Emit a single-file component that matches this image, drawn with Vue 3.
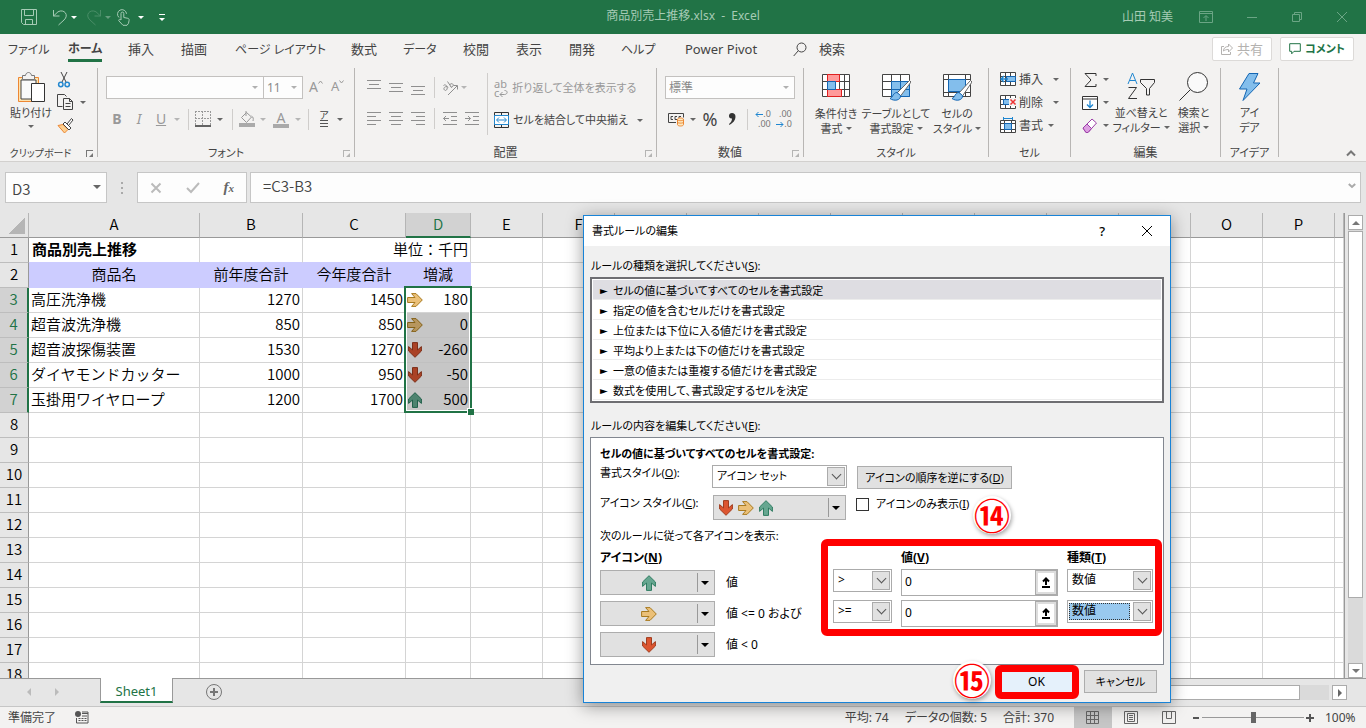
<script setup>
const menus = ['ファイル', 'ホーム', '挿入', '描画', 'ページ レイアウト', '数式', 'データ', '校閲', '表示', '開発', 'ヘルプ', 'Power Pivot']
const isKana = (text) => /^[\u30a0-\u30ff ]+$/.test(text)
const columns = ['A', 'B', 'C', 'D', 'E', 'F', 'G', 'H', 'I', 'J', 'K', 'L', 'M', 'N', 'O', 'P', '']
const blanks = columns.slice(4)
const products = [
  { row: 3, name: '高圧洗浄機', last: 1270, current: 1450, diff: 180, trend: 'flat' },
  { row: 4, name: '超音波洗浄機', last: 850, current: 850, diff: 0, trend: 'flat' },
  { row: 5, name: '超音波探傷装置', last: 1530, current: 1270, diff: -260, trend: 'down' },
  { row: 6, name: 'ダイヤモンドカッター', last: 1000, current: 950, diff: -50, trend: 'down' },
  { row: 7, name: '玉掛用ワイヤロープ', last: 1200, current: 1700, diff: 500, trend: 'up' }
]
const emptyRows = [8, 9, 10, 11, 12, 13, 14, 15, 16, 17, 18]
const ruleTypes = [
  'セルの値に基づいてすべてのセルを書式設定',
  '指定の値を含むセルだけを書式設定',
  '上位または下位に入る値だけを書式設定',
  '平均より上または下の値だけを書式設定',
  '一意の値または重複する値だけを書式設定',
  '数式を使用して、書式設定するセルを決定'
]
const iconRules = [
  { trend: 'up', text: '値', op: '>', value: '0', type: '数値' },
  { trend: 'flat', text: '値 <= 0 および', op: '>=', value: '0', type: '数値', focused: true },
  { trend: 'down', text: '値 < 0' }
]
const turns = { up: 'rotate(0 8 8)', flat: 'rotate(90 8 8)', down: 'rotate(180 8 8)' }
const arrow = 'M8 .7 14.4 7v4.4L10.5 8v7.4h-5V8l-3.9 3.4V7z'
</script>

<template>
  <div class="app">
    <header class="titlebar">
      <div class="quick">
        <button class="save" aria-label="上書き保存"><svg width="18" height="18" viewBox="0 0 18 18"><path d="M1.500 1.500h15v15h-13l-2-2zM4.500 1.500v6h9v-6M5.500 16.500v-5h7v5" /></svg></button>
        <button aria-label="元に戻す"><svg width="18" height="18" viewBox="0 0 18 18"><path d="M2.500 2v6h6M2.500 8 7 3.800C13 .5 18.500 7 13 12l-5.500 5" /></svg></button>
        <i class="caret"></i>
        <button class="redo" aria-label="やり直し"><svg width="18" height="18" viewBox="0 0 18 18"><path d="M15.500 2v6h-6M15.500 8 11 3.800C5 .5-.5 7 5 12l5.500 5" /></svg></button>
        <i class="caret faded"></i>
        <button class="finger" aria-label="タッチ/マウス モード"><svg width="18" height="18" viewBox="0 0 18 18"><path d="M4 9.500a4.500 4.500 0 1 1 7.500-3.700M6 12V5.500a1.400 1.400 0 0 1 2.800 0v4l4 .8c1 .2 1.500 1 1.300 2l-.6 3-1.500 2H8l-4-4.300c-1-1.400.8-2.200 2-1" /></svg></button>
        <i class="caret touch"></i>
        <i class="customize"><i class="caret"></i></i>
      </div>
      <div class="filename">商品別売上推移.xlsx &nbsp;-&nbsp; Excel</div>
      <div class="window-controls">
        <span>山田 知美</span>
        <button aria-label="リボンの表示オプション"><svg width="14" height="12" viewBox="0 0 14 12"><path d="M.5.5h13v11H.5zM.5 2.500h13M7 10V5M4.500 7 7 4.500 9.500 7" /></svg></button>
        <button aria-label="最小化"><svg width="12" height="12" viewBox="0 0 12 12"><path d="M1 6.500h10" /></svg></button>
        <button aria-label="元のサイズに戻す"><svg width="12" height="12" viewBox="0 0 12 12"><path d="M1.500 3.500h7v7h-7zM3.500 3.500v-2h7v7h-2" /></svg></button>
        <button aria-label="閉じる"><svg width="12" height="12" viewBox="0 0 12 12"><path d="m1 1 10 10M11 1 1 11" /></svg></button>
      </div>
    </header>

    <nav class="menubar">
      <button v-for="menu in menus" :key="menu" :class="{ active: menu === 'ホーム', kana: isKana(menu) }">{{ menu }}</button>
      <button class="find"><svg width="14" height="15" viewBox="0 0 14 15"><circle cx="8.500" cy="5.500" r="4.500" /><path d="M5.300 8.700.7 14" /></svg>検索</button>
      <div class="share">
        <button class="disabled"><svg width="12" height="12" viewBox="0 0 12 12"><path d="M3 3.500H.5v8h9V9M2.500 8c0-3 2-4.500 5-4.500V1l4 4-4 4V6.500C5 6.500 4 7 2.500 8z" /></svg>共有</button>
        <button class="comment"><svg width="12" height="12" viewBox="0 0 12 12"><path d="M.7.7h10.600v7.600H5L2.700 10.800V8.300h-2z" /></svg>コメント</button>
      </div>
    </nav>

    <section class="ribbon">
      <div class="group clipboard">
        <div class="body">
          <button class="big">
            <svg width="30" height="32" viewBox="0 0 30 32"><path d="M2.500 5.500h20v24h-20z" fill="#fde3b0" stroke="#ed8733" /><path d="M5 8h15v19H5z" fill="#fafafa" /><path d="M6.500 7.500v-4h3c.5-4 5.500-4 6 0h3v4z" fill="#f3f2f1" stroke="#777" /><path d="M15.500 11.500h13v18h-13z" fill="#fff" stroke="#333" /></svg>
            貼り付け<i class="caret"></i>
          </button>
          <div class="rows">
            <button aria-label="切り取り"><svg width="14" height="17" viewBox="0 0 14 17"><path d="M4 1l5 10M10 1 5 11" stroke="#444" /><circle cx="3.800" cy="13.500" r="2.200" stroke="#2488cf" stroke-width="1.500" /><circle cx="10.200" cy="13.500" r="2.200" stroke="#2488cf" stroke-width="1.500" /></svg></button>
            <button aria-label="コピー"><svg width="17" height="17" viewBox="0 0 17 17"><path d="M5.500 12.500h-5V.5h7l2 2M6.500 4.500h6l3 3v8h-9zM12.500 4.500v3h3M8.500 9.500h5M8.500 12.500h5" stroke="#444" /></svg><i class="caret"></i></button>
            <button aria-label="書式のコピー/貼り付け"><svg width="17" height="17" viewBox="0 0 17 17"><path d="m1 8.500 5-1 5 5L7.500 16z" fill="#fdd090" stroke="#ed8733" /><path d="m6 7 2-2 6 6-2 2zM10 7l4.500-5.500L16 3l-4.500 5.500" fill="#fff" stroke="#444" /></svg></button>
          </div>
        </div>
        <div class="caption">クリップボード<i class="launcher"></i></div>
      </div>

      <div class="group font">
        <div class="body">
          <div class="line1">
            <div class="combo wide"><input aria-label="フォント名"><i class="caret"></i></div>
            <div class="combo size"><input aria-label="フォント サイズ" value="11"><i class="caret"></i></div>
            <button class="off grow" aria-label="フォント サイズの拡大">A<svg width="5" height="4" viewBox="0 0 5 4"><path d="m.5 3.500 2-2.500 2 2.500" /></svg></button>
            <button class="off grow shrink" aria-label="フォント サイズの縮小">A<svg width="5" height="4" viewBox="0 0 5 4"><path d="m.5.500 2 2.500 2-2.500" /></svg></button>
          </div>
          <div class="line2">
            <button class="off"><b>B</b></button>
            <button class="off"><em>I</em></button>
            <button class="off"><u>U</u></button>
            <i class="caret off"></i>
            <i class="sep"></i>
            <button aria-label="罫線"><svg width="16" height="16" viewBox="0 0 16 16"><path d="M.5 0v14M7.500 0v14M15.500 0v14M0 .5h16M0 7.500h16" stroke="#999" stroke-dasharray="2 1" /><path d="M0 15h16" stroke="#333" stroke-width="1.500" /></svg></button>
            <i class="caret"></i>
            <i class="sep"></i>
            <button aria-label="塗りつぶし"><svg width="16" height="16" viewBox="0 0 16 16"><path d="m2.500 6.500 5-5 5 4.500-5 5.500zM7 0v5M12.500 5c2 1 2 3 1.500 5" stroke="#999" /><path d="M0 12h16v4H0z" fill="#aaa" stroke="none" /></svg></button>
            <i class="caret off"></i>
            <button class="off fontcolor">A</button>
            <i class="caret off"></i>
            <i class="sep"></i>
            <button class="ruby">ア<i></i></button>
            <i class="caret"></i>
          </div>
        </div>
        <div class="caption kana">フォント<i class="launcher off"></i></div>
      </div>

      <div class="group align">
        <div class="body">
          <div class="aligns">
            <svg width="16" height="18" viewBox="0 0 16 18"><path d="M1 1.500h14M3 5.500h10M1 9.500h14" /></svg>
            <svg width="16" height="18" viewBox="0 0 16 18"><path d="M1 4.500h14M3 8.500h10M1 12.500h14" /></svg>
            <svg width="16" height="18" viewBox="0 0 16 18"><path d="M1 7.500h14M3 11.500h10M1 15.500h14" /></svg>
            <i class="sep"></i>
            <svg width="16" height="16" viewBox="0 0 16 16"><path d="M1.500 5.500c1.500-1.500 3 0 4.500 2M5 6.500C2.500 6.500 1 8.500 2.500 10S6 9 5 6.500M5.500 1.500l4 6M8 4.500c2-2 4 0 3 1.500s-2 1.500-2.500.5M6 15l9-9M11.500 5.500h4v4" /></svg>
            <i class="caret off"></i>
            <svg width="16" height="16" viewBox="0 0 16 16"><path d="M1 1.500h14M1 5.500h9M1 9.500h14M1 13.500h9" /></svg>
            <svg width="16" height="16" viewBox="0 0 16 16"><path d="M1 1.500h14M3 5.500h10M1 9.500h14M3 13.500h10" /></svg>
            <svg width="16" height="16" viewBox="0 0 16 16"><path d="M1 1.500h14M6 5.500h9M1 9.500h14M6 13.500h9" /></svg>
            <i class="sep"></i>
            <svg width="16" height="16" viewBox="0 0 16 16"><path d="M1 1.500h14M9 5.500h6M9 9.500h6M1 13.500h14M7 7.500H1.500M4 5 1.500 7.500 4 10" /></svg>
            <svg width="16" height="16" viewBox="0 0 16 16"><path d="M1 1.500h14M9 5.500h6M9 9.500h6M1 13.500h14M1 7.500h5.500M4 5l2.500 2.500L4 10" /></svg>
          </div>
          <div class="merges">
            <button class="off"><span class="wrapglyph">ab<br>c<svg width="9" height="7" viewBox="0 0 9 7"><path d="M5.500.500c4 0 3 4 0 4H1M3.500 2 1 4.500 3.500 7" /></svg></span>折り返して全体を表示する</button>
            <button><svg width="15" height="16" viewBox="0 0 15 16"><path d="M.5.500h14v15H.5zM7.500.500v3M7.500 12.500v3" stroke="#333" /><path d="M.5 3.500h14v9H.5z" fill="#fff" stroke="#2488cf" /><path d="M3 8h9M5 5.500 2.500 8 5 10.500M10 5.500 12.500 8 10 10.500" stroke="#2488cf" /></svg>セルを結合して中央揃え<i class="caret"></i></button>
          </div>
        </div>
        <div class="caption">配置<i class="launcher off"></i></div>
      </div>

      <div class="group number">
        <div class="body">
          <div class="combo"><input aria-label="表示形式" value="標準"><i class="caret"></i></div>
          <div class="line2">
            <button aria-label="通貨表示形式"><svg width="18" height="16" viewBox="0 0 18 16"><path d="M.5 11.500v-9h15v4M.5 11.500H8M5 5.500H3v3h2M9 8.500h-2v-3h2M11 7V5.500h2" stroke="#444" /><path d="M9.500 8.500v5c0 2 6 2 6 0v-5c0-2-6-2-6 0zc0 1.500 6 1.500 6 0M9.500 11c0 1.500 6 1.500 6 0" fill="#fde9c0" stroke="#ed8733" /></svg></button>
            <i class="caret"></i>
            <button class="percent">%</button>
            <button aria-label="桁区切り"><svg width="10" height="15" viewBox="0 0 10 15"><path d="M5 1c-4 0-4 6 0 5.500 0 2-1 4-3 5.500l.5 1C6 11 8.500 8 8.500 5 8.500 2 7 1 5 1z" fill="#333" stroke="none" /></svg></button>
            <i class="sep"></i>
            <button class="decimal"><span><svg width="8" height="7" viewBox="0 0 8 7"><path d="M8 3.500H1M3.500 1 1 3.500 3.500 6" /></svg>.0</span><span>.00</span></button>
            <button class="decimal"><span>.00</span><span><svg width="8" height="7" viewBox="0 0 8 7"><path d="M0 3.500h7M4.500 1 7 3.500 4.500 6" /></svg>.0</span></button>
          </div>
        </div>
        <div class="caption">数値<i class="launcher off"></i></div>
      </div>

      <div class="group styles">
        <div class="body">
          <button class="big"><svg width="30" height="28" viewBox="0 0 30 28"><path d="M1.500 1.500h27v22h-27zM1.500 8.500h27M1.500 16.500h27M6.500 1.500v22M18.500 1.500v22M23.500 1.500v22" fill="#fff" stroke="#444" /><path d="M6.500 1.500h12v7h-12zM6.500 16.500h14v7h-14z" fill="#ff9a9a" stroke="#e02020" /><path d="M6.500 8.500h8v8h-8z" fill="#83beec" stroke="#1466b3" /></svg>条件付き<span>書式<i class="caret"></i></span></button>
          <button class="big"><svg width="30" height="28" viewBox="0 0 30 28"><path d="M1.500 1.500h27v22h-27zM1.500 8.500h27M1.500 16.500h27M10.500 1.500v22M19.500 1.500v22" fill="#fff" stroke="#444" /><path d="M10.500 8.500h18v15h-18zM10.500 16.500h18M19.500 8.500v15" fill="#83beec" stroke="#1466b3" /><path d="M16 20 28.500 7.500 30 9 19.500 23z" fill="#fff" stroke="#666" /><path d="M16 19.500c-4 0-4 5-7 6 4 3 11 2 10.500-3z" fill="#83beec" stroke="#1466b3" /></svg>テーブルとして<span>書式設定<i class="caret"></i></span></button>
          <button class="big"><svg width="30" height="28" viewBox="0 0 30 28"><path d="M1.500 1.500h27v22h-27zM1.500 6.500h27M1.500 19.500h27M6.500 1.500v22M23.500 1.500v22" fill="#fff" stroke="#444" /><path d="M6.500 6.500h17v12h-17z" fill="#83beec" stroke="#1466b3" /><path d="M17 20 28.500 7.500 30 9 20.500 23z" fill="#fff" stroke="#666" /><path d="M17 19.500c-4 0-4 5-7 6 4 3 11 2 10.500-3z" fill="#83beec" stroke="#1466b3" /></svg>セルの<span>スタイル<i class="caret"></i></span></button>
        </div>
        <div class="caption kana">スタイル</div>
      </div>

      <div class="group cells">
        <div class="body rows">
          <button><svg width="17" height="15" viewBox="0 0 17 15"><path d="M.5.500h15v13H.5zM.5 4.500h15M.5 9.500h15M5.500.500v13M10.500.500v13" fill="#fff" stroke="#444" /><path d="M6.500 4.500h9v5h-9z" fill="#83beec" stroke="#1466b3" /><path d="M8 7H1M4 4 1 7l3 3" stroke="#1f86d0" stroke-width="1.500" /></svg>挿入<i class="caret far"></i></button>
          <button><svg width="17" height="15" viewBox="0 0 17 15"><path d="M.5.500h15v13H.5zM.5 4.500h15M.5 9.500h15M5.500.500v13M10.500.500v13" fill="#fff" stroke="#444" /><path d="M3.500 4.500h6v5h-6z" fill="#83beec" stroke="#1466b3" /><path d="M9 3h8v8H9z" fill="#f3f2f1" stroke="none" /><path d="m10.500 4.500 5 5M15.500 4.500l-5 5" stroke="#e33" stroke-width="1.500" /></svg>削除<i class="caret far"></i></button>
          <button><svg width="17" height="17" viewBox="0 0 17 17"><path d="M.5 3.500h15v12H.5zM.5 6.500h15M.5 12.500h15M4.500 3.500v12M11.500 3.500v12" fill="#fff" stroke="#444" /><path d="M4.500 6.500h7v6h-7z" fill="#83beec" stroke="#1466b3" /><path d="M3.500 1.500h9M3.500 0v3M12.500 0v3" stroke="#1f86d0" /></svg>書式<i class="caret near"></i></button>
        </div>
        <div class="caption kana">セル</div>
      </div>

      <div class="group edit">
        <div class="body">
          <div class="rows">
            <button aria-label="合計"><svg width="16" height="16" viewBox="0 0 16 16"><path d="M14 4V1.500H3L9 8l-6 6.500h11V12" stroke="#333" /></svg><i class="caret"></i></button>
            <button aria-label="フィル"><svg width="16" height="16" viewBox="0 0 16 16"><path d="M.5 1.500h15v13H.5zM.5 4h15" fill="#fff" stroke="#333" /><path d="M8 5.500V12M5 9.500l3 3 3-3" stroke="#1f86d0" stroke-width="1.300" /></svg><i class="caret"></i></button>
            <button aria-label="クリア"><svg width="16" height="16" viewBox="0 0 16 16"><path d="m1 10 9-9 4.500 4-8.500 9.500H4z" fill="#fff" stroke="#9c3fa8" /><path d="m1 10 4-4 4.500 4.500L6 14.500H4z" fill="#dd9fe2" stroke="#9c3fa8" /></svg><i class="caret"></i></button>
          </div>
          <button class="big"><svg width="30" height="30" viewBox="0 0 30 30"><path d="m2 12 4.500-11L11 12M3.500 8.500h6" stroke="#1f86d0" /><path d="M2.500 15.500h8l-8 11h8.500M14.500 7.500h14v3l-5 6V23h-3v-6.500l-6-6z" stroke="#333" /></svg>並べ替えと<span>フィルター<i class="caret"></i></span></button>
          <button class="big"><svg width="32" height="30" viewBox="0 0 32 30"><circle cx="19.500" cy="10.500" r="10" fill="#fafafa" stroke="#333" /><path d="M12.500 17.500 1.500 28.500" stroke="#333" /></svg>検索と<span>選択<i class="caret"></i></span></button>
        </div>
        <div class="caption">編集</div>
      </div>

      <div class="group ideas">
        <div class="body">
          <button class="big"><svg width="24" height="30" viewBox="0 0 24 30"><path d="M11 1.500h9L15.500 11H22L5 28.500 9 17H1.500z" fill="#83beec" stroke="#1466b3" /></svg>アイ<span>デア</span></button>
        </div>
        <div class="caption kana">アイデア</div>
      </div>
      <button class="collapse" aria-label="リボンを折りたたむ"><svg width="10" height="7" viewBox="0 0 10 7"><path d="m1 5.500 4-4 4 4" stroke-width="2" /></svg></button>
    </section>

    <section class="formulabar">
      <div class="namebox"><input aria-label="名前ボックス" value="D3"><i class="caret"></i></div>
      <div class="dots"><i></i><i></i><i></i></div>
      <div class="fx">
        <button aria-label="キャンセル"><svg width="12" height="12" viewBox="0 0 12 12"><path d="m1.500 1.500 9 9M10.500 1.500l-9 9" stroke-width="2" /></svg></button>
        <button aria-label="入力"><svg width="14" height="12" viewBox="0 0 14 12"><path d="m1 6 4 4 8-9" stroke-width="2" /></svg></button>
        <button class="insertfx"><em>f<small>x</small></em></button>
      </div>
      <div class="formula"><input aria-label="数式バー" value="=C3-B3"><svg width="8" height="6" viewBox="0 0 8 6"><path d="m.8 1 3.200 3L7.200 1" /></svg></div>
    </section>

    <main class="workspace">
      <div class="sheet">
        <table>
          <colgroup><col class="c-head"><col class="c-a"><col class="c-b"><col class="c-b"><col class="c-d"><col v-for="n in 12" :key="n" class="c-std"><col></colgroup>
          <thead>
            <tr><th class="corner"></th><th v-for="(c, i) in columns" :key="i" :class="{ picked: c === 'D' }">{{ c }}</th></tr>
          </thead>
          <tbody>
            <tr class="first"><th>1</th><td class="title filled">商品別売上推移</td><td class="filled"></td><td class="filled num" colspan="2">単位：千円</td><td v-for="(b, i) in blanks" :key="i"></td></tr>
            <tr class="labels"><th>2</th><td class="filled">商品名</td><td class="filled">前年度合計</td><td class="filled">今年度合計</td><td class="filled">増減</td><td v-for="(b, i) in blanks" :key="i"></td></tr>
            <tr v-for="p in products" :key="p.row" class="picked">
              <th>{{ p.row }}</th><td>{{ p.name }}</td><td class="num">{{ p.last }}</td><td class="num">{{ p.current }}</td>
              <td class="diff" :class="{ shaded: p.row > 3 }"><div><svg class="trend" :class="p.trend" width="16" height="16" viewBox="0 0 16 16"><path :d="arrow" :transform="turns[p.trend]" /></svg>{{ p.diff }}</div></td>
              <td v-for="(b, i) in blanks" :key="i"></td>
            </tr>
            <tr v-for="r in emptyRows" :key="r"><th>{{ r }}</th><td v-for="(c, i) in columns" :key="i"></td></tr>
          </tbody>
        </table>
        <div class="selection"><i></i></div>
      </div>
      <div class="vscroll">
        <button class="up" aria-label="上へ"><i></i></button>
        <div class="track"><div class="thumb"></div></div>
        <button class="down" aria-label="下へ"><i></i></button>
      </div>
    </main>

    <div class="sheetbar">
      <button class="nav prev" aria-label="前のシート"></button>
      <button class="nav next" aria-label="次のシート"></button>
      <button class="tab">Sheet1</button>
      <button class="add" aria-label="新しいシート"><svg width="18" height="18" viewBox="0 0 18 18"><circle cx="9" cy="9" r="7.500" /><path d="M9 5v8M5 9h8" stroke-width="2" /></svg></button>
      <div class="hscroll"><div class="thumb"></div></div>
      <button class="right" aria-label="右へ"></button>
    </div>

    <footer class="status">
      <span>準備完了</span>
      <svg class="macro" width="14" height="13" viewBox="0 0 14 13"><circle cx="3" cy="3" r="3" fill="#555" /><path d="M7 1h6v11H1.500V7M7 2.500h6" fill="none" stroke="#555" /><path d="M3.500 7.500h2M6.500 7.500h2M9.500 7.500h2M3.500 9.500h2M6.500 9.500h2M9.500 9.500h2M7 5h5" stroke="#555" /></svg>
      <div class="totals"><span>平均: 74</span><span>データの個数: 5</span><span>合計: 370</span></div>
      <button class="view on" aria-label="標準"><svg width="14" height="14" viewBox="0 0 14 14"><path d="M.5.500h12v12H.5zM.5 4.500h12M.5 8.500h12M4.500.500v12M8.500.500v12" /></svg></button>
      <button class="view" aria-label="ページ レイアウト"><svg width="14" height="14" viewBox="0 0 14 14"><path d="M.5.500h13v12H.5zM3.500 2.500h7v8h-7zM5 4.500h4M5 6.500h4M5 8.500h4" /></svg></button>
      <button class="view" aria-label="改ページ プレビュー"><svg width="14" height="14" viewBox="0 0 14 14"><path d="M.5.500h13v12H.5zM4.500.500v7h5v-7" /></svg></button>
      <button class="zoom out" aria-label="縮小"><svg width="8" height="8" viewBox="0 0 8 8"><path d="M1 4h6" /></svg></button>
      <input class="slider" type="range" min="0" max="100" value="50" aria-label="ズーム">
      <button class="zoom" aria-label="拡大"><svg width="8" height="8" viewBox="0 0 8 8"><path d="M0 4h8M4 0v8" /></svg></button>
      <span class="percentage">100%</span>
    </footer>

    <div class="dialog" role="dialog" aria-label="書式ルールの編集">
      <div class="dialog-title"><span>書式ルールの編集</span><button>?</button><button aria-label="閉じる"><svg width="12" height="12" viewBox="0 0 12 12"><path d="m1 1 10 10M11 1 1 11" /></svg></button></div>
      <div class="dialog-body">
        <p class="prompt">ルールの種類を選択してください(<u>S</u>):</p>
        <ul class="types"><li v-for="(t, i) in ruleTypes" :key="t" :class="{ chosen: i === 0 }"><i>►</i>{{ t }}</li></ul>
        <p class="prompt second">ルールの内容を編集してください(<u>E</u>):</p>
        <div class="details">
          <p><b>セルの値に基づいてすべてのセルを書式設定:</b></p>
          <div class="setting">
            <label for="fmt">書式スタイル(<u>O</u>):</label>
            <div class="dropdown"><select id="fmt"><option>アイコン セット</option></select><i></i></div>
            <button class="plain">アイコンの順序を逆にする(<u>D</u>)</button>
          </div>
          <div class="setting icons">
            <span>アイコン スタイル(<u>C</u>):</span>
            <button class="iconpick set" aria-label="アイコン スタイル"><span><svg v-for="t in ['down', 'flat', 'up']" :key="t" class="trend" :class="t" width="16" height="16" viewBox="0 0 16 16"><path :d="arrow" :transform="turns[t]" /></svg></span><i></i></button>
            <label class="check"><input type="checkbox"><span>アイコンのみ表示(<u>I</u>)</span></label>
          </div>
          <p class="instruction">次のルールに従って各アイコンを表示:</p>
          <div class="heads"><b>アイコン(<u>N</u>)</b><b>値(<u>V</u>)</b><b>種類(<u>T</u>)</b></div>
          <div v-for="r in iconRules" :key="r.trend" class="rule">
            <button class="iconpick" :aria-label="r.text"><span><svg class="trend" :class="r.trend" width="16" height="16" viewBox="0 0 16 16"><path :d="arrow" :transform="turns[r.trend]" /></svg></span><i></i></button>
            <span class="cond">{{ r.text }}</span>
            <template v-if="r.op">
              <div class="dropdown op"><select aria-label="演算子"><option>{{ r.op }}</option></select><i></i></div>
              <div class="ref"><input aria-label="値" :value="r.value"><button aria-label="セル参照"><svg width="10" height="11" viewBox="0 0 10 11"><path d="M5 8V2M2 4.500 5 1.500l3 3M1 10h8" /></svg></button></div>
              <div class="dropdown type" :class="{ focused: r.focused }"><select aria-label="種類"><option>{{ r.type }}</option></select><i></i></div>
            </template>
          </div>
        </div>
        <div class="actions"><button class="plain ok">OK</button><button class="plain">キャンセル</button></div>
      </div>
      <div class="frame values"></div>
      <div class="frame confirm"></div>
      <div class="step fourteen">⑭</div>
      <div class="step fifteen">⑮</div>
    </div>
  </div>
</template>

<style>
body { margin: 0; overflow: hidden; }
</style>

<style scoped>
* { box-sizing: border-box; }
.app { position: relative; display: flex; flex-direction: column; height: 100vh; overflow: hidden; background: #e6e6e6; color: #444; font: 12px/16px "Noto Sans", "Noto Sans CJK JP", sans-serif; font-feature-settings: "palt"; white-space: nowrap; }
button, input, select { font: inherit; font-feature-settings: inherit; color: inherit; border: 0; padding: 0; margin: 0; background: none; min-width: 0; border-radius: 0; }
select { appearance: none; }
svg { fill: none; stroke: currentColor; flex: none; }
p, ul { margin: 0; padding: 0; }
i { font-style: normal; }
.caret { display: block; width: 0; height: 0; border: 3px solid transparent; border-top-color: #666; border-bottom: 0; flex: none; }
.off { color: #999; }
.caret.off { border-top-color: #b5b5b5; }

.titlebar { display: grid; grid-template-columns: 1fr auto 1fr; align-items: center; flex: none; height: 34px; background: #217346; color: #a6cbb5; }
.quick { display: flex; align-items: center; padding-left: 20px; gap: 2px; }
.quick button { display: flex; }
.quick .save { margin-right: 11px; }
.quick .caret { border-top-color: #fff; }
.quick .redo { margin-left: 6px; opacity: .3; }
.quick .faded { opacity: .3; }
.quick .finger { margin-left: 2px; }
.quick .touch { margin-left: 3px; }
.customize { border-top: 1px solid #fff; width: 6px; padding-top: 3px; margin-left: 13px; }
.filename { padding-bottom: 3px; }
.window-controls { display: flex; justify-content: flex-end; align-items: center; padding-right: 18px; gap: 33px; color: #6ba585; }
.window-controls span { color: #a6cbb5; margin-right: -7px; }
.window-controls button { display: flex; }

.menubar { display: grid; grid-template-columns: 60px 60px 53px 54px 116px 52px 60px 53px 53px 52px 64px 108px auto 1fr; flex: none; height: 30px; padding: 3px 12px 0 8px; background: #f3f2f1; font-size: 13px; }
.menubar button { justify-self: start; height: 24px; }
.menubar .kana { font-size: 12px; padding-top: 2px; }
.menubar .active { font-weight: 700; border-bottom: 3px solid #217346; height: 25px; line-height: 20px; }
.menubar .find { display: flex; align-items: center; gap: 12px; }
.share { display: flex; justify-content: flex-end; gap: 8px; }
.menubar .share button { display: flex; align-items: center; justify-content: center; gap: 4px; width: 60px; background: #fff; border: 1px solid #dcdad8; border-radius: 2px; }
.menubar .share .disabled { color: #b4b2b0; }
.menubar .share .comment { width: 74px; color: #217346; font-weight: 700; font-size: 11px; }

.ribbon { display: flex; flex: none; height: 98px; padding: 4px 0 4px; background: #f3f2f1; border-bottom: 1px solid #d2d0ce; }
.group { display: flex; flex-direction: column; flex: none; height: 89px; border-right: 1px solid #b8b6b4; }
.body { flex: none; display: flex; height: 78px; }
.caption { position: relative; height: 11px; line-height: 14px; text-align: center; }
.caption.kana { font-size: 11px; }
.launcher { position: absolute; right: 4px; bottom: 0; width: 7px; height: 7px; border: solid #777; border-width: 1px 0 0 1px; }
.launcher::after { content: ""; position: absolute; right: 0; bottom: 0; border: 2px solid transparent; border-right-color: #777; border-bottom-color: #777; }
.launcher.off { opacity: .5; }
.big { display: flex; flex-direction: column; align-items: center; padding-top: 4px; line-height: 15px; font-size: 11px; }
.big span { display: flex; align-items: center; gap: 3px; }
.rows { display: flex; flex-direction: column; }
.rows button { display: flex; align-items: center; height: 23px; gap: 4px; }
.clipboard { width: 98px; }
.clipboard .big { width: 52px; margin-left: 5px; line-height: 17px; }
.clipboard .big .caret { margin-top: 4px; }
.clipboard .rows button { gap: 6px; }
.clipboard .caption { padding-right: 16px; font-size: 10px; }
.font { width: 257px; }
.font .body, .number .body { flex-direction: column; padding: 8px 8px 0; gap: 8px; }
.combo { display: flex; align-items: center; height: 23px; border: 1px solid #c3c1bf; background: #fdfdfd; padding: 0 5px 0 3px; color: #8a8a8a; }
.combo input { flex: 1; width: 10px; }
.combo .caret { border-top-color: #b0b0b0; }
.line1 { display: flex; }
.wide { width: 158px; }
.size { width: 40px; margin-left: -1px; }
.grow { display: flex; font-size: 14px; line-height: 21px; margin-left: 6px; }
.grow svg { margin-top: 4px; }
.shrink { font-size: 13px; margin-left: 8px; }
.line2 { display: grid; height: 24px; align-items: center; justify-items: center; }
.font .line2 { grid-template-columns: 22px 22px 22px 10px 12px 18px 16px 8px 22px 10px 26px 8px 12px 20px 12px; font-size: 14px; }
.line2 button { display: flex; }
.sep { width: 1px; height: 21px; background: #cfcdcb; }
.fontcolor { border-bottom: 4px solid #aaa; width: 16px; height: 16px; justify-content: center; line-height: 12px; margin-top: 1px; }
.line2 .ruby { flex-direction: column; align-items: center; font-size: 10px; line-height: 9px; }
.ruby i { width: 8px; height: 7px; border: solid #555; border-width: 1px 0; background: linear-gradient(#555, #555) center / 8px 1px no-repeat; }
.align { width: 302px; }
.aligns { display: grid; grid-template-columns: 22px 22px 22px 10px 22px 22px; grid-template-rows: 21px 21px; gap: 10px 0; width: 132px; padding: 9px 0 0 8px; align-items: center; justify-items: center; color: #8f8f8f; }
.aligns .caret { justify-self: start; }
.merges { display: flex; flex-direction: column; gap: 8px; margin-top: 5px; height: 62px; border-left: 1px solid #cfcdcb; padding: 3px 0 0 6px; font-size: 11px; }
.merges button { display: flex; align-items: center; height: 24px; gap: 4px; }
.merges .caret { margin-left: 5px; }
.wrapglyph { font-size: 11px; line-height: 9px; text-align: left; }
.number { width: 147px; }
.number .line2 { grid-template-columns: 24px 8px 26px 18px 12px 20px 22px; }
.percent { font-size: 18px; }
.number .decimal { flex-direction: column; align-items: flex-end; font-size: 9px; line-height: 10px; color: #777; }
.decimal span { display: flex; align-items: center; }
.decimal svg { stroke: #1f86d0; }
.styles { width: 185px; }
.styles .body { display: grid; grid-template-columns: 48px 72px 50px; padding-left: 8px; justify-items: center; }
.styles .big { padding-top: 5px; }
.styles .big svg { margin-bottom: 5px; }
.cells { width: 82px; }
.cells .body { padding-left: 11px; }
.cells button { gap: 2px; }
.cells .far { margin-left: 8px; }
.cells .near { margin-left: 3px; }
.edit { width: 150px; }
.edit .rows { padding-left: 11px; width: 44px; }
.edit .rows button { gap: 5px; }
.edit > .body > .big { width: 53px; }
.edit .big svg, .ideas .big svg { margin-bottom: 3px; }
.ideas { width: 58px; }
.ideas .body { justify-content: center; }
.collapse { display: flex; align-self: flex-end; margin: 0 10px 0 auto; color: #777; }

.formulabar { display: flex; flex: none; height: 51px; padding: 10px 5px 10px; }
.formulabar > div { border: 1px solid #c6c6c6; background: #fdfdfd; height: 31px; }
.namebox { display: flex; align-items: center; width: 102px; padding: 2px 5px 0 6px; font: 350 15px/20px "Noto Sans CJK JP", sans-serif; }
.namebox input { flex: 1; }
.namebox .caret { border-width: 4px 4px 0; margin-bottom: 4px; }
.formulabar .dots { display: flex; flex-direction: column; justify-content: center; align-items: center; gap: 3px; width: 30px; border: 0; background: none; }
.dots i { width: 2px; height: 2px; background: #aaa; }
.fx { display: flex; align-items: center; justify-content: space-around; width: 110px; color: #bbb; }
.fx button { display: flex; }
.insertfx { font: 700 15px/18px "Liberation Serif", serif; color: #666; }
.insertfx small { font-size: 11px; }
.formula { display: flex; flex: 1; align-items: center; margin-left: 3px; padding: 0 4px 4px 12px; font: 350 15px/20px "Noto Sans CJK JP", sans-serif; }
.formula input { flex: 1; }
.formula svg { stroke: #aaa; stroke-width: 2; }

.workspace { display: flex; flex: 1; min-height: 0; }
.sheet { position: relative; flex: 1; overflow: hidden; border-right: 1px solid #999; }
table { width: 100%; table-layout: fixed; border-spacing: 0; font: 350 15px/22px "Noto Sans CJK JP", sans-serif; font-feature-settings: normal; color: #000; }
.c-head { width: 29px; } .c-a { width: 171px; } .c-b { width: 103px; } .c-d { width: 65px; } .c-std { width: 72px; }
th { height: 25px; padding: 0; vertical-align: top; font-weight: 350; background: #e6e6e6; border: solid #bdbdbd; border-width: 0 1px 1px 0; }
thead th { border-bottom-color: #999; border-right-color: #b5b5b5; }
tbody th { border-right-color: #999; }
thead .picked { background: #d2d2d2; color: #217346; border-bottom: 2px solid #217346; }
.picked th { background: #d2d2d2; color: #217346; border-right: 2px solid #217346; }
.corner { background: linear-gradient(135deg, transparent 50%, #b5b5b5 50%) 8px 4px / 17px 17px no-repeat #e6e6e6; }
td { height: 25px; padding: 0 2px; vertical-align: top; background: #fff; border: solid #d4d4d4; border-width: 0 1px 1px 0; overflow: hidden; }
.first .filled { border-bottom-color: #ccccff; }
.title { font-weight: 700; padding-left: 3px; }
.labels .filled { background: #ccccff; border-color: #ccccff; text-align: center; }
.num { text-align: right; }
.diff { padding: 0 2px 0 1px; }
.diff div { display: flex; justify-content: space-between; }
.diff svg { margin-top: 4px; }
.shaded { background: #c6c6c6; border-color: #c0c0c0; }
.selection { position: absolute; left: 404px; top: 73px; width: 68px; height: 127px; border: 2px solid #217346; box-shadow: inset 0 0 0 1px #fff; }
.selection i { position: absolute; right: -4px; bottom: -4px; width: 7px; height: 7px; background: #217346; border: 1px solid #fff; border-width: 1px 0 0 1px; }
.trend { stroke-width: 1; }
.trend.up { fill: #66a690; stroke: #2f7d62; }
.trend.flat { fill: #ebc078; stroke: #a87a20; }
.trend.down { fill: #dc5530; stroke: #a03c1e; }
.shaded .up { fill: #4d836f; stroke: #20604a; }
.shaded .flat { fill: #b7965e; stroke: #846118; }
.shaded .down { fill: #aa4226; stroke: #7c2e18; }
.vscroll { display: flex; flex-direction: column; width: 21px; padding: 2px 3px 0; flex: none; }
.vscroll button { display: flex; align-items: center; justify-content: center; height: 15px; background: #fff; border: 1px solid #ababab; }
.vscroll button i { border: 4px solid transparent; border-top: 0; border-bottom-color: #777; }
.vscroll .down i { border-top: 4px solid #777; border-bottom: 0; }
.track { flex: 1; background: #dadada; padding-top: 1px; }
.vscroll .thumb { height: 85%; background: #fff; border: 1px solid #ababab; }

.sheetbar { display: flex; flex: none; height: 28px; border-top: 1px solid #999; padding-right: 19px; }
.nav { width: 28px; padding: 0 0 2px; display: flex; align-items: center; justify-content: center; }
.nav::after { content: ""; border: 4px solid transparent; border-right-color: #bbb; border-left: 0; }
.prev { margin-left: 15px; }
.next::after { border-left: 4px solid #bbb; border-right: 0; }
.tab { width: 73px; height: 25px; margin: -1px 0 0 29px; background: #fff; border: 1px solid #999; border-width: 0 1px 2px; border-bottom-color: #217346; color: #217346; font-size: 13px; padding-top: 2px; }
.add { display: flex; align-items: center; margin-left: 32px; padding-bottom: 2px; color: #777; }
.hscroll { display: flex; width: 590px; height: 15px; margin: 6px 3px 0 auto; background: #dadada; }
.hscroll .thumb { width: 95%; background: #fff; border: 1px solid #ababab; }
.right { display: flex; align-items: center; justify-content: center; width: 15px; height: 15px; margin-top: 6px; border: 1px solid #ababab; background: #fff; }
.right::after { content: ""; border: 4px solid transparent; border-left-color: #666; border-right: 0; }

.status { display: flex; align-items: center; flex: none; height: 22px; background: #f3f2f1; border-top: 1px solid #c6c6c6; padding: 0 8px; }
.macro { margin-left: 19px; stroke: none; }
.totals { display: flex; gap: 16px; margin: 0 20px 0 auto; }
.view { display: flex; align-items: center; justify-content: center; width: 38px; height: 21px; color: #666; }
.view.on { background: #c6c6c6; }
.zoom { display: flex; color: #555; margin: 0 2px; }
.zoom.out { margin-left: 4px; }
.zoom svg { stroke-width: 2; }
.slider { appearance: none; width: 102px; height: 14px; background: linear-gradient(#999, #999) center / 100% 1px no-repeat; }
.slider::-webkit-slider-thumb { appearance: none; width: 5px; height: 11px; background: #666; }
.percentage { width: 33px; margin-left: 9px; }

.dialog { position: absolute; left: 583px; top: 215px; width: 588px; height: 488px; border: 1px solid #1883d7; background: #f0f0f0; box-shadow: 0 3px 16px rgba(0, 0, 0, .4); color: #000; font-size: 11px; }
.dialog-title { display: flex; align-items: center; height: 30px; background: #fff; padding: 0 17px 0 8px; }
.dialog-title span { flex: 1; }
.dialog-title button { display: flex; margin-left: 36px; font-size: 13px; font-weight: 500; }
.dialog-body { padding: 12px 6px 0; }
.prompt { padding-left: 1px; }
.types { list-style: none; margin-top: 3px; border: 2px solid #6e6e72; background: #fff; padding: 1px; }
.types li { display: flex; height: 20px; line-height: 21px; border-bottom: 1px solid #ececec; padding-left: 7px; }
.types .chosen { background: #dedde2; }
.types i { width: 13px; font: 10px/22px "DejaVu Sans", sans-serif; }
.second { margin-top: 15px; }
.details { margin-top: 3px; padding: 8px 9px 2px; border: 1px solid #828790; background: #fff; }
.setting { display: grid; grid-template-columns: 112px 135px 165px; margin-top: 3px; height: 24px; }
.setting > :nth-child(3) { margin-left: 10px; }
.setting.icons { margin-top: 6px; height: 25px; }
.dropdown { display: flex; align-items: center; height: 23px; border: 1px solid #ababab; background: #fff; padding: 1px; }
.dropdown select { flex: 1; align-self: stretch; padding: 0 3px 1px; }
.dropdown i { display: flex; justify-content: center; align-items: center; width: 18px; height: 19px; background: #e1e1e1; border: 1px solid #ababab; }
.dropdown i::after { content: ""; width: 6px; height: 6px; margin-top: -4px; border: solid #555; border-width: 0 1px 1px 0; transform: rotate(45deg); }
.plain { height: 23px; background: #e1e1e1; border: 1px solid #adadad; }
.setting .plain { margin-top: 1px; }
.iconpick { display: flex; align-items: center; width: 115px; height: 25px; background: #e1e1e1; border: 1px solid #adadad; }
.iconpick span { display: flex; flex: 1; justify-content: center; gap: 4px; }
.iconpick i { display: flex; align-items: center; justify-content: center; width: 17px; height: 19px; border-left: 1px solid #999; padding-right: 2px; }
.iconpick i::after { content: ""; border: 4px solid transparent; border-top-color: #000; border-bottom: 0; }
.set { width: 133px; margin-left: 1px; }
.set span { justify-content: flex-start; padding-left: 4px; }
.check { display: flex; gap: 7px; align-items: center; height: 18px; }
.check input { appearance: none; width: 13px; height: 13px; border: 1px solid #333; background: #fff; margin-left: -1px; }
.instruction { margin-top: 8px; }
.heads { display: grid; grid-template-columns: 301px 166px 1fr; margin-top: 6px; font-size: 12px; }
.rule { display: grid; grid-template-columns: 126px 107px 68px 166px 86px; height: 31px; align-items: start; font-size: 12px; }
.heads + .rule { margin-top: 3px; }
.rule .iconpick { margin-top: 1px; }
.cond { line-height: 28px; }
.op { width: 59px; }
.ref { display: flex; width: 157px; height: 27px; border: 1px solid #ababab; }
.ref input { flex: 1; padding: 0 3px 2px; }
.ref button { display: flex; align-items: center; justify-content: center; width: 22px; background: #fff; border: 3px solid #ddd; outline: 1px solid #ababab; outline-offset: -1px; }
.ref svg { stroke-width: 2; }
.focused select { background: #99c9ef; outline: 1px dotted #333; outline-offset: -1px; margin: 1px 3px 1px 0; padding-bottom: 2px; }
.actions { display: flex; justify-content: flex-end; gap: 11px; margin-top: 5px; padding-right: 7px; }
.actions .plain { width: 73px; }
.actions .ok { background: #e5f1fb; font-size: 12px; }
.frame { position: absolute; border: 7px solid #f00; border-radius: 6px; pointer-events: none; }
.values { left: 237px; top: 323px; width: 341px; height: 97px; }
.confirm { left: 411px; top: 449px; width: 84px; height: 34px; }
.step { position: absolute; width: 38px; height: 38px; border-radius: 50%; background: #fff; box-shadow: 1px 2px 4px rgba(0, 0, 0, .35); color: #f00; font: 700 36px/36px "Noto Sans CJK JP", sans-serif; font-feature-settings: normal; display: flex; justify-content: center; }
.fourteen { left: 389px; top: 280px; }
.fifteen { left: 369px; top: 445px; }
</style>
